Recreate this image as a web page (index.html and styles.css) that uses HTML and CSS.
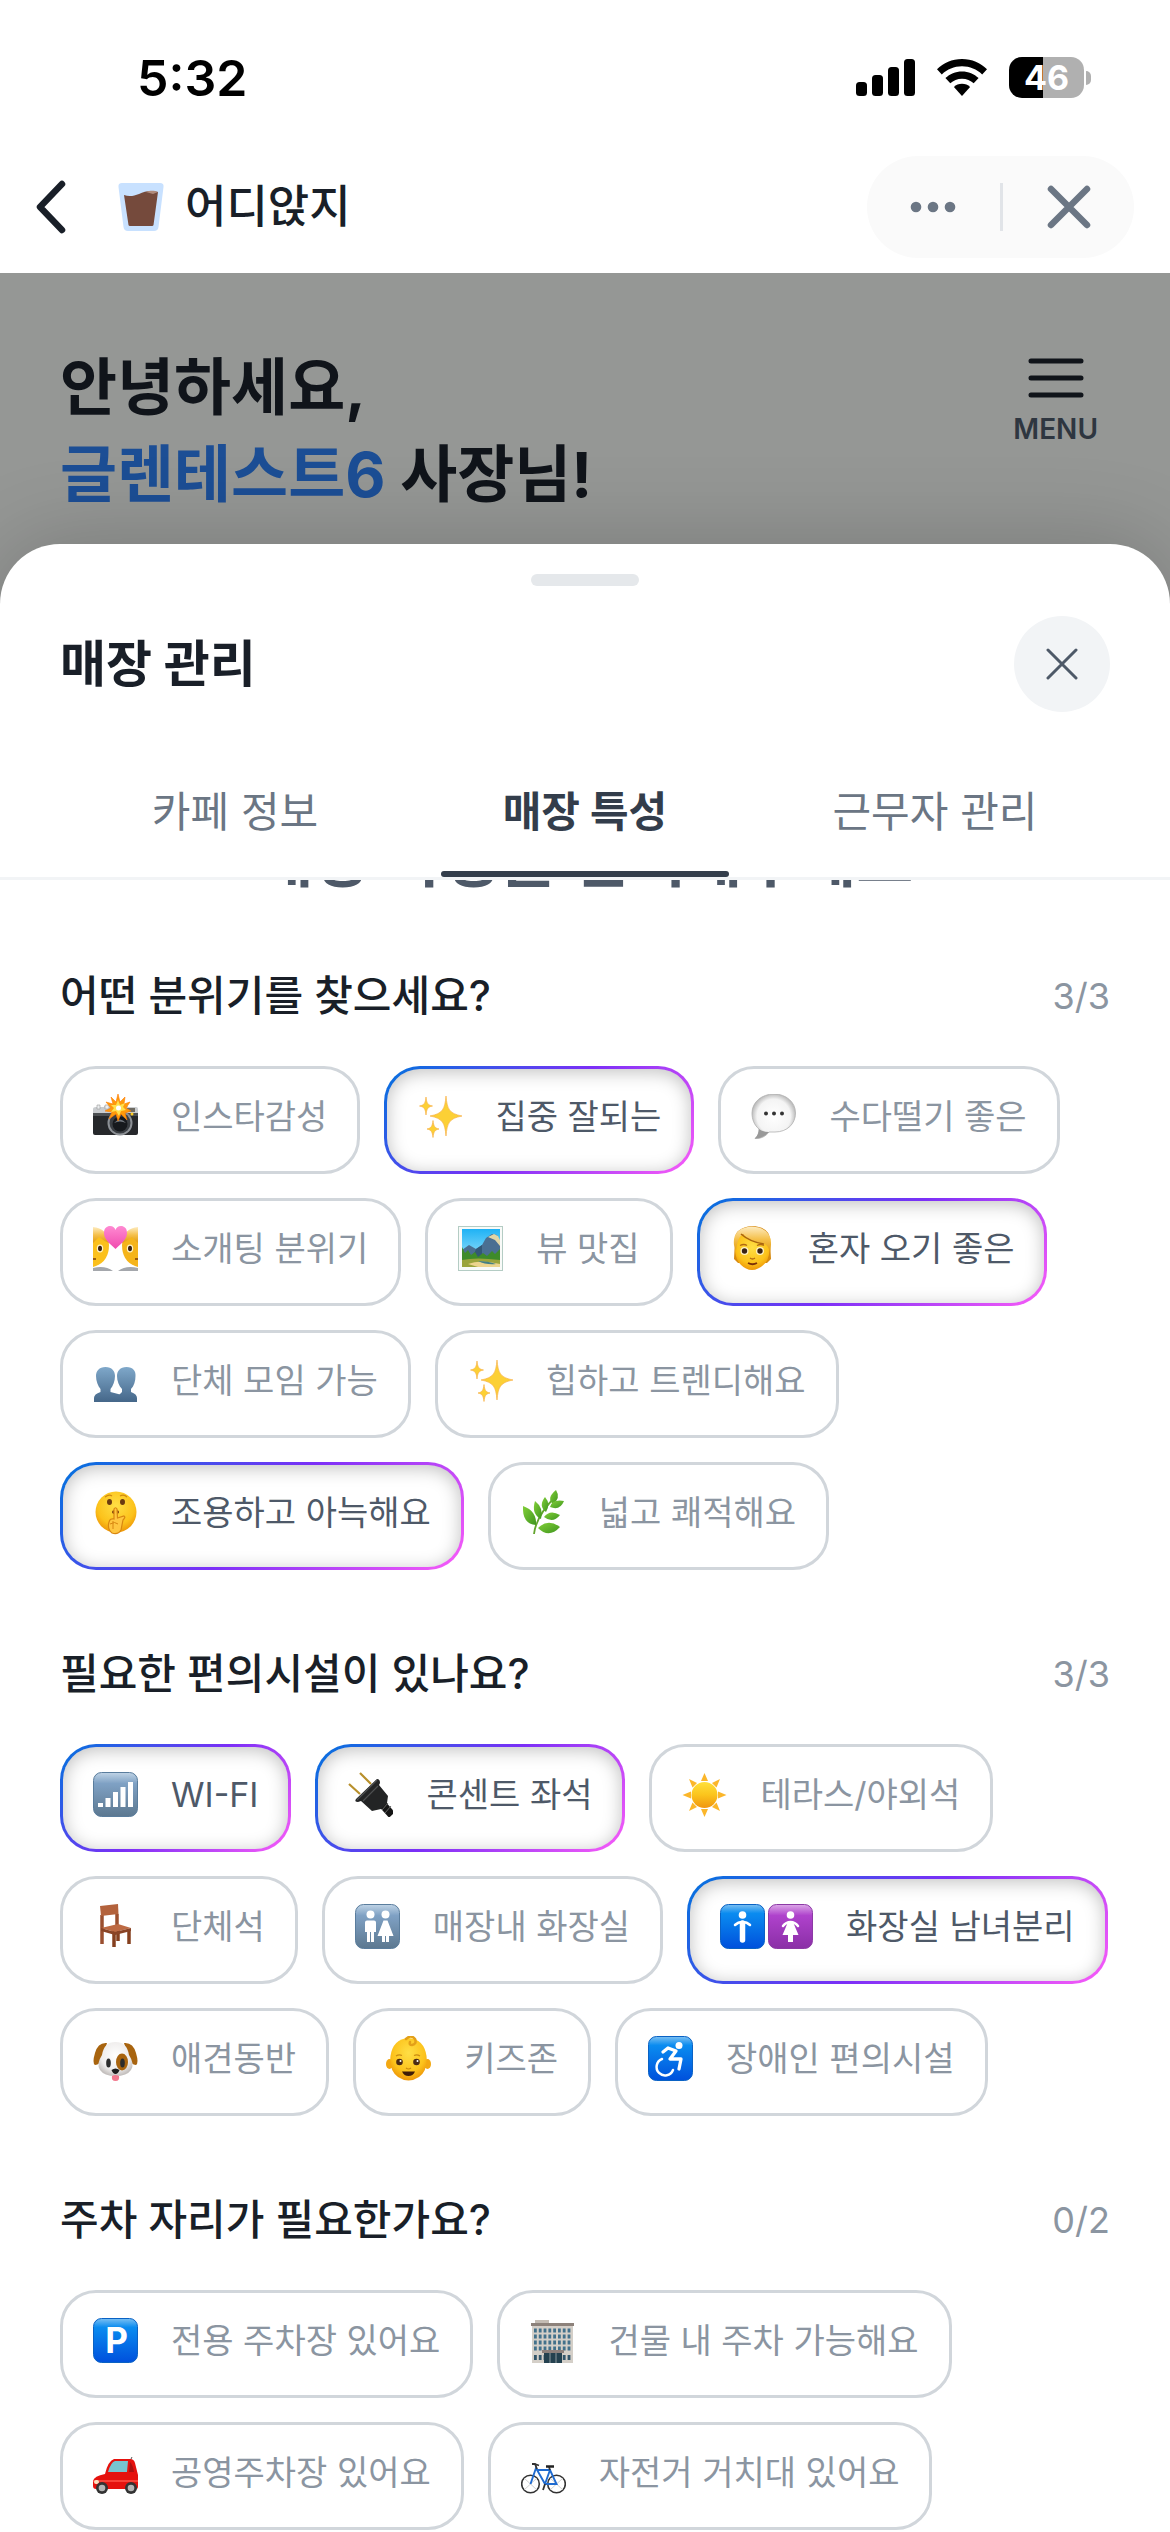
FILE: index.html
```html
<!DOCTYPE html>
<html lang="ko">
<head>
  <meta charset="UTF-8">
  <meta name="viewport" content="width=device-width, initial-scale=1.0">
  <title>어디앉지</title>
  <link rel="stylesheet" href="styles.css">
</head>
<body>
  <!-- Shared gradients for the icons -->
  <svg class="defs" width="0" height="0" aria-hidden="true">
    <defs>
      <linearGradient id="blueTile" x1="0" y1="0" x2="0" y2="1">
        <stop offset="0" stop-color="#7cc0f2"/><stop offset=".2" stop-color="#0a8cf0"/><stop offset="1" stop-color="#0050dc"/>
      </linearGradient>
      <linearGradient id="grayTile" x1="0" y1="0" x2="0" y2="1">
        <stop offset="0" stop-color="#c0d4e6"/><stop offset=".25" stop-color="#7fa1c4"/><stop offset="1" stop-color="#5c7890"/>
      </linearGradient>
      <linearGradient id="purpleTile" x1="0" y1="0" x2="0" y2="1">
        <stop offset="0" stop-color="#dca8e8"/><stop offset=".25" stop-color="#af42cc"/><stop offset="1" stop-color="#8a2fa6"/>
      </linearGradient>
      <linearGradient id="bust" x1="0" y1="0" x2="0" y2="1">
        <stop offset="0" stop-color="#7fa8ca"/><stop offset="1" stop-color="#456789"/>
      </linearGradient>
      <linearGradient id="sun" x1="0" y1="0" x2="0" y2="1">
        <stop offset="0" stop-color="#ffe03a"/><stop offset=".5" stop-color="#fbc41c"/><stop offset="1" stop-color="#f0960f"/>
      </linearGradient>
      <linearGradient id="hair" x1="0" y1="0" x2="0" y2="1">
        <stop offset="0" stop-color="#fdebc0"/><stop offset=".5" stop-color="#f5c04a"/><stop offset="1" stop-color="#e09a10"/>
      </linearGradient>
      <radialGradient id="face" cx=".5" cy=".35" r=".65">
        <stop offset="0" stop-color="#ffdf45"/><stop offset=".7" stop-color="#fcc21b"/><stop offset="1" stop-color="#ee9708"/>
      </radialGradient>
      <radialGradient id="bubble" cx=".5" cy=".5" r=".55">
        <stop offset="0" stop-color="#ffffff"/><stop offset=".7" stop-color="#f4f4f4"/><stop offset="1" stop-color="#a8a8a8"/>
      </radialGradient>
      <radialGradient id="dogFace" cx=".5" cy=".4" r=".6">
        <stop offset="0" stop-color="#ffffff"/><stop offset=".7" stop-color="#efedec"/><stop offset="1" stop-color="#c4c0be"/>
      </radialGradient>
      <linearGradient id="leaf" x1="0" y1="0" x2="1" y2="1">
        <stop offset="0" stop-color="#82cf38"/><stop offset="1" stop-color="#3f961f"/>
      </linearGradient>
      <linearGradient id="sky" x1="0" y1="0" x2="0" y2="1">
        <stop offset="0" stop-color="#1fb2f5"/><stop offset="1" stop-color="#b5ecfb"/>
      </linearGradient>
      <linearGradient id="heart" x1="0" y1="0" x2="0" y2="1">
        <stop offset="0" stop-color="#ff8ad2"/><stop offset="1" stop-color="#f04aae"/>
      </linearGradient>
      <symbol id="sparkles" viewBox="0 0 45 45">
        <g fill="#fcd035" stroke="#f8b24a" stroke-width=".7">
          <path d="M29 2C30.200 15 32 19.500 45 22 32 24.500 30.200 29 29 42 27.800 29 26 24.500 13 22 26 19.500 27.800 15 29 2Z"/>
          <path d="M9 3C9.700 9 10.500 11 15.500 12 10.500 13 9.700 15 9 21 8.300 15 7.500 13 2.500 12 7.500 11 8.300 9 9 3Z"/>
          <path d="M16 26.500C16.700 32 17.500 34 22 35 17.500 36 16.700 38 16 43.500 15.300 38 14.500 36 10 35 14.500 34 15.300 32 16 26.500Z"/>
        </g>
      </symbol>
    </defs>
  </svg>

  <div class="app">
    <!-- Status bar -->
    <div class="status-bar">
      <span class="status-time">5:32</span>
      <div class="status-icons">
        <svg width="59" height="38" viewBox="0 0 59 38" aria-hidden="true">
          <rect x="0" y="23" width="11" height="14" rx="3.500"/>
          <rect x="16" y="16" width="11" height="21" rx="3.500"/>
          <rect x="32" y="8" width="11" height="29" rx="3.500"/>
          <rect x="48" y="0" width="11" height="37" rx="3.500"/>
        </svg>
        <svg width="52" height="38" viewBox="0 0 52 38" aria-hidden="true">
          <path d="M26 0C36 0 44.500 4 51 10.200L46.200 15.400C40.700 10.200 33.900 7.200 26 7.200S11.300 10.200 5.800 15.400L1 10.200C7.500 4 16 0 26 0Z"/>
          <path d="M26 12.500C32.500 12.500 38.200 15 42.600 19.100L37.700 24.300C34.600 21.400 30.600 19.700 26 19.700S17.400 21.400 14.300 24.300L9.400 19.100C13.800 15 19.500 12.500 26 12.500Z"/>
          <path d="M26 24.800C29.200 24.800 32 26 34.100 28L26 37 17.900 28C20 26 22.800 24.800 26 24.800Z"/>
        </svg>
        <div class="battery"><span class="battery-body">46</span><span class="battery-cap"></span></div>
      </div>
    </div>

    <!-- Top navigation -->
    <header class="nav">
      <button type="button" class="icon-button" aria-label="뒤로">
        <svg width="36" height="56" viewBox="0 0 36 56" fill="none" stroke="#191f28" stroke-width="6.500" stroke-linecap="round" stroke-linejoin="round"><path d="M30 5 8 28 30 51"/></svg>
      </button>
      <svg class="nav-logo" width="48" height="48" viewBox="0 0 48 48" aria-hidden="true">
        <path d="M5 0H43Q47 0 46.500 4L41.500 44Q41 48 37 48H11Q7 48 6.500 44L1.500 4Q1 0 5 0Z" fill="#c8e1ff"/>
        <path d="M7 12C12 14 17 13 22 11 28 8 34 7 41 9L36.500 42Q36.300 43 35 43H13Q11.700 43 11.500 42Z" fill="#754a3c"/>
        <path d="M29 9C34 7 38 8 41 9L36 11Z" fill="#b08b7c"/>
      </svg>
      <span class="nav-title">어디앉지</span>
      <div class="nav-pill">
        <button type="button" class="icon-button" aria-label="더보기">
          <svg width="46" height="44" viewBox="0 0 46 44" fill="#6b7684"><circle cx="6" cy="22" r="5.300"/><circle cx="23" cy="22" r="5.300"/><circle cx="40" cy="22" r="5.300"/></svg>
        </button>
        <span class="nav-divider"></span>
        <button type="button" class="icon-button" aria-label="닫기">
          <svg width="44" height="44" viewBox="0 0 44 44" stroke="#6b7684" stroke-width="6.500" stroke-linecap="round"><path d="M4 4 40 40M40 4 4 40"/></svg>
        </button>
      </div>
    </header>

    <!-- Dimmed home screen -->
    <section class="home">
      <h1 class="greeting">안녕하세요,<br><span class="greeting-name">글렌테스트6</span> 사장님!</h1>
      <button type="button" class="menu-button">
        <svg width="56" height="40" viewBox="0 0 56 40" stroke="#10141a" stroke-width="5" stroke-linecap="round" aria-hidden="true"><path d="M3 3H53M3 20H53M3 37H53"/></svg>
        MENU
      </button>
    </section>

    <!-- Bottom sheet -->
    <main class="sheet">
      <div class="sheet-handle"></div>
      <div class="sheet-header">
        <h2 class="sheet-title">매장 관리</h2>
        <button type="button" class="sheet-close" aria-label="닫기">
          <svg width="32" height="32" viewBox="0 0 32 32" stroke="#4e5968" stroke-width="3" stroke-linecap="round"><path d="M2 2 30 30M30 2 2 30"/></svg>
        </button>
      </div>
      <nav class="tabs" role="tablist">
        <button type="button" class="tab" role="tab" aria-selected="false">카페 정보</button>
        <button type="button" class="tab active" role="tab" aria-selected="true">매장 특성</button>
        <button type="button" class="tab" role="tab" aria-selected="false">근무자 관리</button>
      </nav>

      <div class="sheet-content">
        <p class="content-title">매장 특성을 선택해주세요</p>

        <section class="group">
          <div class="group-header"><h3>어떤 분위기를 찾으세요?</h3><span class="count">3/3</span></div>
          <div class="chips">
            <button type="button" class="chip">
              <svg class="emoji" viewBox="0 0 45 45">
                <path d="M3 13h8v-1h24v1h8q2 0 2 2v5H0v-5q0-2 3-2Z" fill="#c9cccf"/>
                <rect x="34" y="14" width="8" height="4" fill="#6e6a62"/>
                <path d="M4 11h3v4H4zM12 11h4v4h-4z" fill="#eceef0" stroke="#999" stroke-width=".6"/>
                <path d="M0 19H45V39q0 2-2 2H2q-2 0-2-2Z" fill="#26282b"/>
                <path d="M0 19H45v3H0z" fill="#4c4f52"/>
                <circle cx="27" cy="29" r="12.500" fill="#8d9196"/><circle cx="27" cy="29" r="10.500" fill="#3a3e43"/>
                <circle cx="27" cy="30" r="7.500" fill="#16191d"/><path d="M21 29q6-7 12 0-6-3-12 0Z" fill="#70767d"/>
                <path d="M25 0 27 8 32 3 31 10 37 8 33 14 38 17 32 19 34 26 28 20 25 27 23 20 16 25 19 18 12 17 18 14 13 8 20 10 18 3 23 8Z" fill="#ff9a0a" stroke="#ff7a00" stroke-width=".6"/>
                <path d="M25 6 27 11 32 9 30 13 33 16 28 17 26 22 23 17 18 18 21 14 18 11 23 11Z" fill="#ffe14d"/><circle cx="25.500" cy="14" r="2.500" fill="#fff"/>
                <circle cx="39" cy="20" r="1.500" fill="#ffcc20"/>
              </svg>
              인스타감성
            </button>
            <button type="button" class="chip selected" aria-pressed="true">
              <svg class="emoji"><use href="#sparkles"/></svg>
              집중 잘되는
            </button>
            <button type="button" class="chip">
              <svg class="emoji" viewBox="0 0 45 45">
                <path d="M23 0C35 0 44.500 8 44.500 19S36 38 24 38H18C15 42 10 45 4 44.500 7 42 8 39 8 35 3 31 1 25 1 19 1 8 11 0 23 0Z" fill="url(#bubble)" stroke="#b0b0b0" stroke-width=".8"/>
                <path d="M8 35Q12 38 18 38 13 44 4 44.500 8 40 8 35Z" fill="#999"/>
                <circle cx="15" cy="19.500" r="2" fill="#333"/><circle cx="23" cy="19.500" r="2" fill="#333"/><circle cx="31" cy="19.500" r="2" fill="#333"/>
              </svg>
              수다떨기 좋은
            </button>
            <button type="button" class="chip">
              <svg class="emoji" viewBox="0 0 45 45">
                <path d="M0 45V42Q12 39 20 45ZM45 45V42Q33 39 25 45Z" fill="#a4a7ac"/>
                <path d="M0 5Q15 5 16 19 16 35 3 40L0 41Z" fill="#fbc01c"/><path d="M45 5Q30 5 29 19 29 35 42 40L45 41Z" fill="#f5b41a"/>
                <path d="M0 1Q14 2 16 17 11 15 6 11L0 17Z" fill="url(#hair)"/><path d="M45 1Q31 2 29 17 34 15 39 11L45 17Z" fill="url(#hair)"/>
                <ellipse cx="7" cy="22.500" rx="3.200" ry="4" fill="#fff3c4"/><ellipse cx="7" cy="22.500" rx="2" ry="2.800" fill="#3c2415"/>
                <ellipse cx="37" cy="22.500" rx="3.200" ry="4" fill="#fff3c4"/><ellipse cx="37" cy="22.500" rx="2" ry="2.800" fill="#3c2415"/>
                <path d="M0 33h3M42 33h3" stroke="#7b3c08" stroke-width="1.500"/>
                <path d="M22.500 23C16 17 11 13 11 7 11 2 14 0 17 0 20 0 22 2 22.500 4 23 2 25 0 28 0 31 0 34 2 34 7 34 13 29 17 22.500 23Z" fill="url(#heart)"/>
              </svg>
              소개팅 분위기
            </button>
            <button type="button" class="chip">
              <svg class="emoji" viewBox="0 0 45 45">
                <rect x=".5" y=".5" width="44" height="44" fill="#f8faf8" stroke="#b4ccc4"/>
                <rect x="4" y="3" width="38" height="38" fill="url(#sky)"/>
                <path d="M4 24 11 19 18 23 24 19 28 12 34 8 39 9 42 15V35H4Z" fill="#4a6f92"/>
                <path d="M30 11 36 8 40 10 42 14V20L37 14Z" fill="#e0d6a8"/><path d="M18 23 24 19 24 33H14Z" fill="#335876"/>
                <path d="M4 21 7 27 10 24 13 29 17 26 20 31 25 27 29 30 34 25 37 28 42 23V36H4Z" fill="#3e8b2a"/>
                <path d="M4 34Q18 31 42 34V41H4Z" fill="#9aa43c"/><path d="M10 38Q22 33 42 38V41H20Z" fill="#ecd48e"/><path d="M20 35Q30 35 38 38 28 39 20 35Z" fill="#427f85"/>
              </svg>
              뷰 맛집
            </button>
            <button type="button" class="chip selected" aria-pressed="true">
              <svg class="emoji" viewBox="0 0 45 45">
                <path d="M5 14Q4 2 22 0 41 1 40 16L41 33 37 37H8L4 33Z" fill="#d68a10"/>
                <path d="M5 22Q5 11 10 9H35Q40 12 39.500 24 39 38 28 42.500 22 45.500 16 42.500 5 37 5 22Z" fill="url(#face)"/>
                <path d="M4 19Q2 2 22 .5 42 2 41 19L40 26Q38 18 32 17 19 15 13 8 7 12 6 25Z" fill="url(#hair)"/>
                <path d="M11 8Q20 16 34 18" fill="none" stroke="#a86410" stroke-width="1.500"/>
                <ellipse cx="14.500" cy="25" rx="4" ry="4" fill="#fff3c4"/><ellipse cx="30" cy="25" rx="4" ry="4" fill="#fff3c4"/>
                <circle cx="14.500" cy="25" r="2.700" fill="#3a2215"/><circle cx="30" cy="25" r="2.700" fill="#3a2215"/>
                <path d="M10 19.500q4-2 7 0M27 19.500q4-2 7 0M20 32q2.500 2 5 0" stroke="#b26a10" fill="none" stroke-width="1.300"/>
                <path d="M18 37q4.500 2.500 9 0" fill="none" stroke="#7b3008" stroke-width="1.800"/>
              </svg>
              혼자 오기 좋은
            </button>
            <button type="button" class="chip">
              <svg class="emoji" viewBox="0 0 45 45">
                <path d="M33.500 9C40 9 43 13 42.500 18 42.500 23 41 28 38 31V34Q44 36 44 40V44H23V40L29 34V31C26 28 24 23 24 18 24 13 27 9 33.500 9Z" fill="url(#bust)"/>
                <path d="M12.500 9C19 9 22 13 22 18 22 23 20 28 17.500 31V34L29 37Q32 39 32 44H1V40Q1 36 7.500 34V31C5 28 3 23 3 18 3 13 6 9 12.500 9Z" fill="url(#bust)"/>
              </svg>
              단체 모임 가능
            </button>
            <button type="button" class="chip">
              <svg class="emoji"><use href="#sparkles"/></svg>
              힙하고 트렌디해요
            </button>
            <button type="button" class="chip selected" aria-pressed="true">
              <svg class="emoji" viewBox="0 0 45 45">
                <circle cx="23" cy="22" r="20.500" fill="url(#face)"/>
                <ellipse cx="16.500" cy="12" rx="2.500" ry="3" fill="#6b3a10"/><ellipse cx="29.500" cy="12" rx="2.500" ry="3" fill="#6b3a10"/>
                <path d="M12 7q4-3 7-1M27 6q4-2 7 1" fill="none" stroke="#d08a10" stroke-width="1.200"/>
                <ellipse cx="22.500" cy="22" rx="3.500" ry="2" fill="#82430d"/>
                <path d="M21 19Q22.500 16.500 24 19L24.500 28 31 26Q33 27 30 30L28 40Q25 45 19 43 14 39 16 32 17 28 21 29Z" fill="#ffc640" stroke="#d88610" stroke-width="1.200"/>
                <path d="M17 34q5-3 8 0M20 31v8" fill="none" stroke="#d88610"/>
              </svg>
              조용하고 아늑해요
            </button>
            <button type="button" class="chip">
              <svg class="emoji" viewBox="0 0 45 45">
                <path d="M13 44Q15 26 35 6" fill="none" stroke="#63a52e" stroke-width="1.800"/>
                <g fill="url(#leaf)">
                  <path d="M35 0Q40 8 32 14 25 8 35 0Z"/><path d="M43 11Q39 21 29 17 31 9 43 11Z"/><path d="M24 7Q30 14 25 22 17 16 24 7Z"/>
                  <path d="M39 25Q32 34 23 27 29 19 39 25Z"/><path d="M14 11Q23 18 20 29 10 24 14 11Z"/><path d="M2 16Q16 21 15 35 1 34 2 16Z"/><path d="M39 37Q28 49 17 38 27 28 39 37Z"/>
                </g>
              </svg>
              넓고 쾌적해요
            </button>
          </div>
        </section>

        <section class="group">
          <div class="group-header"><h3>필요한 편의시설이 있나요?</h3><span class="count">3/3</span></div>
          <div class="chips">
            <button type="button" class="chip selected" aria-pressed="true">
              <svg class="emoji" viewBox="0 0 45 45">
                <rect x=".5" y=".5" width="44" height="44" rx="8" fill="url(#grayTile)" stroke="#5a7d9d"/>
                <path d="M5 31h5v4H5zM12.500 26h5v9h-5zM20 20h5v15h-5zM27.500 15h5v20h-5zM35 10h5v25h-5z" fill="#fff"/>
              </svg>
              WI-FI
            </button>
            <button type="button" class="chip selected" aria-pressed="true">
              <svg class="emoji" viewBox="0 0 45 45">
                <path d="M1 12 12 22M12 1 23 12" stroke="#b8902c" stroke-width="2.200"/>
                <path d="M35 33 44 43" stroke="#151515" stroke-width="8"/><path d="M34 38 40 31M37 41 43 34" stroke="#666" stroke-width="1"/>
                <path d="M29 7Q32 7 32 11L31 13 40 24 39 31 33 37 24 39 13 29 10 30Q6 30 8 27Z" fill="#232425"/>
                <path d="M29 8 9 28M30 14 15 29" stroke="#4d4f50" stroke-width="1.200"/>
              </svg>
              콘센트 좌석
            </button>
            <button type="button" class="chip">
              <svg class="emoji" viewBox="0 0 45 45">
                <path d="M22.500 1 26 9H19ZM22.500 45 26 37H19ZM.5 23 9 19.500V26.500ZM44.500 23 36 19.500V26.500ZM7 7 15 11 10.500 15.500ZM38 7 30 11 34.500 15.500ZM7 39 15 35 10.500 30.500ZM38 39 30 35 34.500 30.500Z" fill="#fbb62a"/>
                <circle cx="22.500" cy="23" r="13" fill="url(#sun)"/>
              </svg>
              테라스/야외석
            </button>
            <button type="button" class="chip">
              <svg class="emoji" viewBox="0 0 45 45">
                <g stroke-linejoin="round">
                  <path d="M9 11V40M24 10V21" stroke="#9a4f2f" stroke-width="3.500"/>
                  <path d="M21 27V43M36 25V40M25 24V37" stroke="#85401f" stroke-width="3.500"/>
                  <path d="M7 2 25 0 25.500 10 8 12Z" fill="#b3623c"/>
                  <path d="M8 24 25 20 38 24 22 28Z" fill="#bd6a43"/>
                  <path d="M8 24 22 28 38 24V27L22 31 8 27Z" fill="#8a4426"/>
                </g>
              </svg>
              단체석
            </button>
            <button type="button" class="chip">
              <svg class="emoji" viewBox="0 0 45 45">
                <rect x=".5" y=".5" width="44" height="44" rx="8" fill="url(#grayTile)" stroke="#5a7d9d"/>
                <g fill="#fff">
                  <circle cx="15.500" cy="10.500" r="4"/><circle cx="30.500" cy="10.500" r="4"/>
                  <path d="M12 16.500h7q2 0 2 2V28h-2v10h-3V28h-1v10h-3V28h-2v-9.500q0-2 2-2ZM28.500 16.500h4L38.500 32H34v6h-3v-6h-1v6h-3v-6h-4.500Z"/>
                </g>
              </svg>
              매장내 화장실
            </button>
            <button type="button" class="chip selected" aria-pressed="true">
              <span class="emoji-pair">
                <svg class="emoji" viewBox="0 0 45 45">
                  <rect x=".5" y=".5" width="44" height="44" rx="8" fill="url(#blueTile)" stroke="#0a62c4"/>
                  <circle cx="22.500" cy="11" r="3.800" fill="#fff"/><path d="M15 21Q18 18 22.500 18T30 21" fill="none" stroke="#fff" stroke-width="2.500" stroke-linecap="round"/><path d="M22.500 19V36" stroke="#fff" stroke-width="5.500" stroke-linecap="round"/>
                </svg>
                <svg class="emoji" viewBox="0 0 45 45">
                  <rect x=".5" y=".5" width="44" height="44" rx="8" fill="url(#purpleTile)" stroke="#8c3aa5"/>
                  <circle cx="22.500" cy="11" r="3.800" fill="#fff"/><path d="M15 22Q18 18 22.500 18T30 22" fill="none" stroke="#fff" stroke-width="2.500" stroke-linecap="round"/><path d="M20 18H25L30.500 31H25V38H20V31H14.500Z" fill="#fff"/>
                </svg>
              </span>
              화장실 남녀분리
            </button>
            <button type="button" class="chip">
              <svg class="emoji" viewBox="0 0 45 45">
                <path d="M14 7Q5 6 2 17-1 27 2 29 7 29 10 21ZM31 7Q40 6 43 17 46 27 43 29 38 29 35 21Z" fill="#a8640f"/>
                <path d="M22.500 6Q34 6 36 19 42 28 38 34 34 40 22.500 40T7 34Q3 28 9 19 11 6 22.500 6Z" fill="url(#dogFace)"/>
                <ellipse cx="29" cy="26" rx="6" ry="8.500" fill="#a8640f"/>
                <ellipse cx="15.500" cy="27" rx="2.300" ry="4.500" fill="#2c2c2c"/><ellipse cx="29.500" cy="27" rx="2.300" ry="4.500" fill="#2c2c2c"/>
                <path d="M18.500 34Q22.500 31 26.500 34 25 38 22.500 38T18.500 34Z" fill="#1d1d1d"/>
                <path d="M19 40Q22.500 38 26 40 27 45 22.500 45T19 40Z" fill="#f2798e"/>
              </svg>
              애견동반
            </button>
            <button type="button" class="chip">
              <svg class="emoji" viewBox="0 0 45 45">
                <ellipse cx="3.500" cy="28" rx="3.500" ry="5" fill="#f3a812"/><ellipse cx="41.500" cy="28" rx="3.500" ry="5" fill="#f3a812"/>
                <path d="M22.500 2Q38 3 40.500 20 42 35 33 41 22.500 48 12 41 3 35 4.500 20 7 3 22.500 2Z" fill="url(#face)"/>
                <path d="M20 3Q25-2 29 3 31 8 26 9 23 9 24 6" fill="none" stroke="#e3a018" stroke-width="2.500" stroke-linecap="round"/>
                <circle cx="13.500" cy="26" r="3.300" fill="#4a2a14"/><circle cx="30.500" cy="26" r="3.300" fill="#4a2a14"/><circle cx="14.500" cy="25" r="1" fill="#fff"/><circle cx="31.500" cy="25" r="1" fill="#fff"/>
                <path d="M10 20q3-2 6-.5M28 19.500q3-1.500 6 .5M20 32q2.500 2 5 0" fill="none" stroke="#c98a10" stroke-width="1.200"/>
                <path d="M16 35.500H29Q27 40 22.500 40T16 35.500Z" fill="#3f1d08"/>
              </svg>
              키즈존
            </button>
            <button type="button" class="chip">
              <svg class="emoji" viewBox="0 0 45 45">
                <rect x=".5" y=".5" width="44" height="44" rx="8" fill="url(#blueTile)" stroke="#0a62c4"/>
                <circle cx="31" cy="9.500" r="3.500" fill="#fff"/>
                <path d="M15 16 20 12 28 15 22 23H33L31 33" fill="none" stroke="#fff" stroke-width="3.300" stroke-linecap="round" stroke-linejoin="round"/>
                <path d="M14 23A8.500 8.500 0 1 0 25 34" fill="none" stroke="#fff" stroke-width="2.500" stroke-linecap="round"/>
              </svg>
              장애인 편의시설
            </button>
          </div>
        </section>

        <section class="group">
          <div class="group-header"><h3>주차 자리가 필요한가요?</h3><span class="count">0/2</span></div>
          <div class="chips">
            <button type="button" class="chip">
              <svg class="emoji" viewBox="0 0 45 45">
                <rect x=".5" y=".5" width="44" height="44" rx="8" fill="url(#blueTile)" stroke="#0a62c4"/>
                <text x="23.500" y="35" class="tile-letter">P</text>
              </svg>
              전용 주차장 있어요
            </button>
            <button type="button" class="chip">
              <svg class="emoji" viewBox="0 0 45 45">
                <path d="M5 2h14v4H5z" fill="#c4bcb4"/><path d="M2 7H43V45H2Z" fill="#d4cfc8"/><path d="M1 5H44V8H1Z" fill="#8d827b"/>
                <path d="M4 12.500H41M4 18.500H41M4 24.500H41M4 30.500H41" stroke="#43718b" stroke-width="4" stroke-dasharray="2.800 2"/>
                <path d="M4 39.500H41" stroke="#33566b" stroke-width="5" stroke-dasharray="2.800 2"/>
                <path d="M12 32H34V35H12Z" fill="#8d807c"/><path d="M14 35H32V45H14Z" fill="#24414f"/><path d="M20 35v10M26 35v10" stroke="#8d9a9f"/>
              </svg>
              건물 내 주차 가능해요
            </button>
            <button type="button" class="chip">
              <svg class="emoji" viewBox="0 0 45 45">
                <path d="M37 11 39 7" stroke="#555" stroke-width="1"/>
                <path d="M21 9H37Q41 9 42 13L45 25V37Q45 39 43 39H3Q0 39 0 36V31Q1 26 12 24 15 11 21 9Z" fill="#e5120e"/>
                <path d="M22 11H35L34 22H15Q18 12 22 11Z" fill="#78c4cf"/><path d="M37 12Q40 15 41 22H36Z" fill="#a11"/>
                <path d="M0 31H45" stroke="#ff5347" stroke-width="1.500"/><rect x="1" y="30" width="5" height="4" rx="2" fill="#ffe2c0"/>
                <circle cx="9" cy="38" r="6" fill="#333"/><circle cx="9" cy="38" r="3.300" fill="#b5b5b5"/><circle cx="38" cy="38" r="6" fill="#333"/><circle cx="38" cy="38" r="3.300" fill="#b5b5b5"/>
              </svg>
              공영주차장 있어요
            </button>
            <button type="button" class="chip">
              <svg class="emoji" viewBox="0 0 45 45" fill="none">
                <circle cx="9.500" cy="34" r="8.800" stroke="#333" stroke-width="1.600"/><circle cx="35.500" cy="34" r="8.800" stroke="#333" stroke-width="1.600"/>
                <path d="M3 28 16 40M3 40 16 28M29 28 42 40M29 40 42 28" stroke="#bbb" stroke-width=".7"/>
                <path d="M9.500 34 15 18 24 34H35.500L29 20H16M29 20 24 34" stroke="#1f6bd0" stroke-width="1.900"/>
                <path d="M16 19 14 14H11M14 14 18 15.500M29 20 28 17M24 34 22 40" stroke="#333" stroke-width="1.800"/><path d="M25 16.500H33" stroke="#222" stroke-width="2.500"/>
              </svg>
              자전거 거치대 있어요
            </button>
          </div>
        </section>
      </div>
    </main>
  </div>

  <script>
    // Toggle a chip
    document.querySelectorAll('.chip').forEach(chip => {
      chip.addEventListener('click', () => {
        const selected = chip.classList.toggle('selected');
        chip.setAttribute('aria-pressed', selected);
      });
    });
  </script>
</body>
</html>
```
FILE: styles.css
```css
* {
  box-sizing: border-box;
}

body {
  margin: 0;
  background: #fff;
  color: #191f28;
  font-family: Inter, "Noto Sans CJK KR", sans-serif;
}

h1, h2, h3, p {
  margin: 0;
}

button {
  margin: 0;
  padding: 0;
  border: none;
  background: none;
  font-family: inherit;
  color: inherit;
  cursor: pointer;
}

svg {
  display: block;
}

.defs {
  position: absolute;
}

.app {
  display: flex;
  flex-direction: column;
  min-height: 100vh;
}

/* Status bar */
.status-bar {
  display: flex;
  justify-content: space-between;
  align-items: center;
  height: 141px;
  padding: 14px 79px 0 137px;
}

.status-time {
  color: #000;
  font-size: 50px;
  font-weight: 600;
  line-height: 60px;
}

.status-icons {
  display: flex;
  align-items: center;
  gap: 21px;
}

.battery {
  display: flex;
  align-items: center;
  gap: 2px;
}

.battery-body {
  width: 75px;
  border-radius: 13px;
  background: linear-gradient(90deg, #000 46%, #b0b0b0 46%);
  color: #fff;
  font-size: 34px;
  font-weight: 700;
  line-height: 41px;
  text-align: center;
}

.battery-cap {
  width: 5px;
  height: 14px;
  border-radius: 0 5px 5px 0;
  background: #b0b0b0;
}

/* Top navigation */
.nav {
  display: flex;
  align-items: center;
  height: 132px;
  padding: 0 36px 0 32px;
}

.nav-logo {
  margin-left: 49px;
}

.nav-title {
  margin-left: 20px;
  font-size: 45px;
  font-weight: 500;
  line-height: 60px;
}

.nav-pill {
  display: flex;
  align-items: center;
  gap: 44px;
  height: 102px;
  margin-left: auto;
  padding: 0 43px;
  border-radius: 51px;
  background: #fafafa;
}

.nav-divider {
  width: 3px;
  height: 48px;
  background: #e1e4e8;
}

/* Dimmed home screen */
.home {
  display: flex;
  justify-content: space-between;
  align-items: flex-start;
  padding: 71px 72px 86px 60px;
  background: #959795;
  color: #10141a;
}

.greeting {
  font-size: 62px;
  font-weight: 700;
  line-height: 87px;
}

.greeting-name {
  color: #1c4e95;
}

.menu-button {
  display: flex;
  flex-direction: column;
  align-items: center;
  gap: 14px;
  padding-top: 14px;
  color: #2e3640;
  font-size: 28px;
  font-weight: 600;
  line-height: 34px;
}

/* Bottom sheet */
.sheet {
  flex: 1;
  margin-top: -60px;
  padding-top: 30px;
  border-radius: 60px 60px 0 0;
  background: #fff;
  box-shadow: 0 0 90px rgba(0, 0, 0, 0.2);
}

.sheet-handle {
  width: 108px;
  height: 12px;
  margin: 0 auto;
  border-radius: 6px;
  background: #e5e8eb;
}

.sheet-header {
  display: flex;
  justify-content: space-between;
  align-items: center;
  padding: 30px 60px 35px;
}

.sheet-title {
  font-size: 50px;
  font-weight: 700;
  line-height: 60px;
}

.sheet-close {
  display: flex;
  justify-content: center;
  align-items: center;
  width: 96px;
  height: 96px;
  border-radius: 50%;
  background: #f2f4f6;
}

.tabs {
  display: flex;
  padding: 0 60px;
  border-bottom: 3px solid #f2f4f6;
}

.tab {
  position: relative;
  flex: 1;
  color: #6b7684;
  font-size: 42px;
  line-height: 130px;
}

.tab.active {
  color: #333d4b;
  font-weight: 700;
}

.tab.active::after {
  content: "";
  position: absolute;
  right: 31px;
  bottom: 0;
  left: 31px;
  height: 6px;
  border-radius: 3px;
  background: #333d4b;
}

/* Scrolled content */
.sheet-content {
  overflow: hidden;
  padding: 0 60px;
}

.content-title {
  margin-top: -53px;
  color: #4e5968;
  font-size: 62px;
  font-weight: 700;
  line-height: 65px;
  text-align: center;
}

.group {
  padding-top: 74px;
}

.group-header {
  display: flex;
  justify-content: space-between;
  align-items: center;
  margin-bottom: 40px;
  line-height: 60px;
}

.group-header h3 {
  font-size: 42px;
  font-weight: 500;
}

.count {
  color: #8b95a1;
  font-size: 36px;
}

.chips {
  display: flex;
  flex-wrap: wrap;
  gap: 24px;
}

.chip {
  display: flex;
  align-items: center;
  gap: 33px;
  padding: 25px 30px 32px;
  border: 3px solid #d1d6db;
  border-radius: 36px;
  background: #fff;
  color: #8b95a1;
  font-size: 34px;
  line-height: 45px;
  white-space: nowrap;
}

.chip.selected {
  border-color: transparent;
  background:
    linear-gradient(#fff, #fff) padding-box,
    linear-gradient(135deg, #0074dd, #7b2ff7 50%, #fb5cf8) border-box;
  box-shadow: inset 0 3px 18px rgba(0, 0, 0, 0.25);
  color: #4e5968;
}

.emoji {
  flex: none;
  width: 45px;
  height: 45px;
}

.emoji-pair {
  display: flex;
  gap: 3px;
}

.tile-letter {
  fill: #fff;
  font-size: 35px;
  font-weight: 700;
  text-anchor: middle;
}
```
